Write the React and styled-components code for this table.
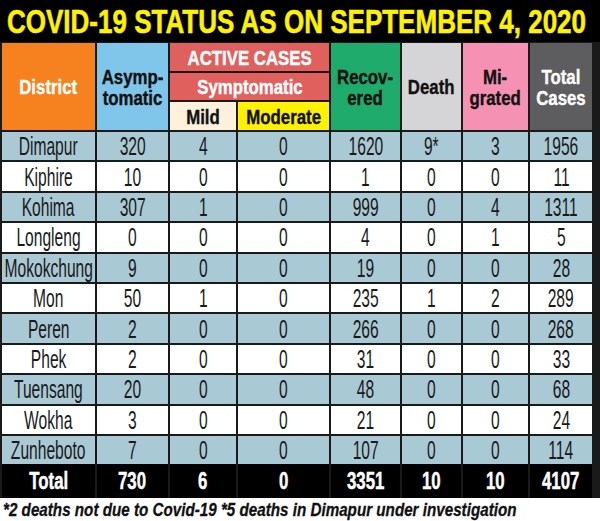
import React from "react";
import styled, {createGlobalStyle} from "styled-components";

const sans = `"Liberation Sans", Arial, sans-serif`;

const Global = createGlobalStyle`
    html, body {
        margin: 0;
        padding: 0;
        background: #ffffff;
    }
`;

const Page = styled.main`
    width: 600px;
    height: 521px;
    overflow: hidden;
    font-family: ${sans};
`;

const TitleBar = styled.header`
    height: 42px;
    background: #000000;
    display: flex;
    align-items: center;
    justify-content: center;
    padding-right: 8px;
`;

const Title = styled.h1`
    margin: 0;
    color: #fff200;
    font-size: 34px;
    font-weight: 700;
    line-height: 1;
    white-space: nowrap;
    -webkit-text-stroke: 0.6px #fff200;
`;

const Table = styled.section`
    display: grid;
    grid-template-columns: 93px 71px 66px 91px 69px 59px 65px 62px;
    grid-template-rows: 28px 27px 28px repeat(11, 28.4px) 32px;
    gap: 2px;
    padding: 1px 8px 0 2px;
    background: #1a1a1a;
`;

const HeadCell = styled.div`
    background: ${p => p.$bg};
    color: ${p => p.$fg || "#111111"};
    grid-column: ${p => p.$col || "auto"};
    grid-row: ${p => p.$row || "auto"};
    display: flex;
    align-items: center;
    justify-content: center;
    text-align: center;
    font-weight: 700;
    font-size: 21px;
    line-height: 21px;
    -webkit-text-stroke: 0.4px ${p => p.$fg || "#111111"};
`;

const Cell = styled.div`
    background: ${p => (p.$shade ? "#a9c9d5" : "#ffffff")};
    color: #1a1a1a;
    display: flex;
    align-items: center;
    justify-content: center;
    font-size: 26px;
    line-height: 1;
`;

const TotalCell = styled.div`
    background: #000000;
    color: #ffffff;
    display: flex;
    align-items: center;
    justify-content: center;
    font-weight: 700;
    font-size: 24px;
    line-height: 1;
    margin-top: -2px;
    -webkit-text-stroke: 0.5px #ffffff;
`;

const Squeeze = styled.span`
    display: inline-block;
    transform: scaleX(${p => p.$x || 0.6});
    white-space: nowrap;
`;

const Note = styled.p`
    margin: 0;
    height: 24px;
    display: flex;
    align-items: center;
    font-size: 19px;
    font-weight: 700;
    font-style: italic;
    color: #111111;
    white-space: nowrap;
    transform-origin: 3px center;
    transform: scaleX(0.8);
    padding-left: 3px;
    -webkit-text-stroke: 0.3px #111111;
`;

const rows = [
    ["Dimapur", "320", "4", "0", "1620", "9*", "3", "1956"],
    ["Kiphire", "10", "0", "0", "1", "0", "0", "11"],
    ["Kohima", "307", "1", "0", "999", "0", "4", "1311"],
    ["Longleng", "0", "0", "0", "4", "0", "1", "5"],
    ["Mokokchung", "9", "0", "0", "19", "0", "0", "28"],
    ["Mon", "50", "1", "0", "235", "1", "2", "289"],
    ["Peren", "2", "0", "0", "266", "0", "0", "268"],
    ["Phek", "2", "0", "0", "31", "0", "0", "33"],
    ["Tuensang", "20", "0", "0", "48", "0", "0", "68"],
    ["Wokha", "3", "0", "0", "21", "0", "0", "24"],
    ["Zunheboto", "7", "0", "0", "107", "0", "0", "114"],
];

const totals = ["Total", "730", "6", "0", "3351", "10", "10", "4107"];

const heads = [
    {text: "District", bg: "#f5821f", fg: "#ffffff", col: "1", row: "1 / 4"},
    {text: ["Asymp-", "tomatic"], bg: "#80c5ea", col: "2", row: "1 / 4"},
    {text: "ACTIVE CASES", bg: "#e0605e", fg: "#ffffff", col: "3 / 5", row: "1"},
    {text: "Symptomatic", bg: "#e0605e", fg: "#ffffff", col: "3 / 5", row: "2"},
    {text: "Mild", bg: "#fdf1dc", col: "3", row: "3"},
    {text: "Moderate", bg: "#fff200", col: "4", row: "3"},
    {text: ["Recov-", "ered"], bg: "#1fab6b", col: "5", row: "1 / 4"},
    {text: "Death", bg: "#d5d5d7", col: "6", row: "1 / 4"},
    {text: ["Mi-", "grated"], bg: "#f592b3", col: "7", row: "1 / 4"},
    {text: ["Total", "Cases"], bg: "#5d5d5f", fg: "#ffffff", col: "8", row: "1 / 4"},
];

export default function App() {
    return (
        <Page>
            <Global/>
            <TitleBar>
                <Title>
                    <Squeeze $x={0.765}>COVID-19 STATUS AS ON SEPTEMBER 4, 2020</Squeeze>
                </Title>
            </TitleBar>
            <Table>
                {heads.map(h => (
                    <HeadCell key={h.col + h.row} $bg={h.bg} $fg={h.fg} $col={h.col} $row={h.row}>
                        <Squeeze $x={0.8}>
                            {Array.isArray(h.text) ? <>{h.text[0]}<br/>{h.text[1]}</> : h.text}
                        </Squeeze>
                    </HeadCell>
                ))}
                {rows.map((r, i) =>
                    r.map((v, j) => (
                        <Cell key={`${i}-${j}`} $shade={i % 2 === 0}>
                            <Squeeze>{v}</Squeeze>
                        </Cell>
                    ))
                )}
                {totals.map((v, j) => (
                    <TotalCell key={`t-${j}`}>
                        <Squeeze $x={0.7}>{v}</Squeeze>
                    </TotalCell>
                ))}
            </Table>
            <Note>*2 deaths not due to Covid-19 *5 deaths in Dimapur under investigation</Note>
        </Page>
    );
}
